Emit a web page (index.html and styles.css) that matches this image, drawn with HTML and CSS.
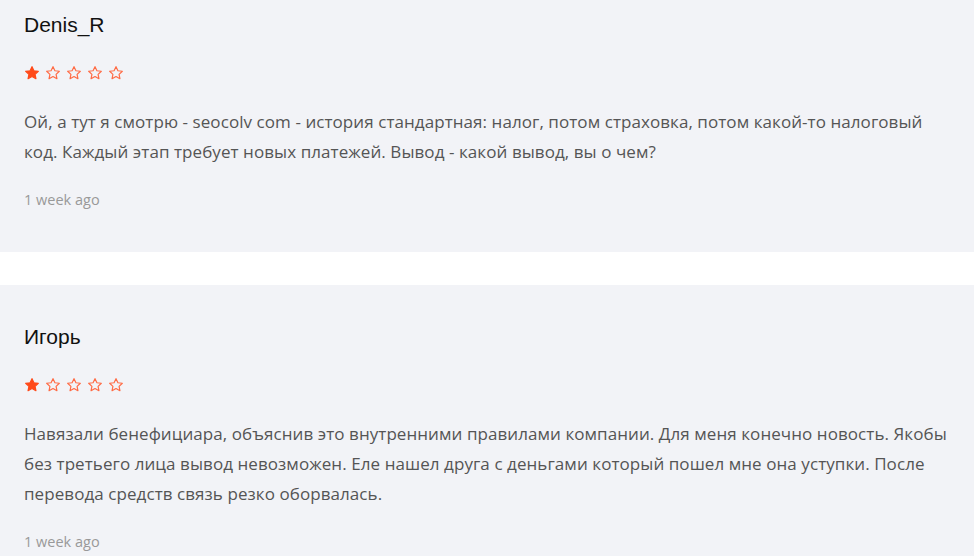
FILE: index.html
```html
<!DOCTYPE html>
<html lang="ru">
<head>
    <meta charset="UTF-8">
    <meta name="viewport" content="width=device-width, initial-scale=1.0">
    <title>Отзывы</title>
    <link rel="stylesheet" href="styles.css">
</head>
<body>

    <div class="reviews">
        <div class="review">
            <div class="review-name">Denis_R</div>
            <div class="review-stars">
                <svg class="star star-full" viewBox="0 0 24 24"><path d="M12 2.5l2.9 6.1 6.6.8-4.9 4.6 1.3 6.6L12 17.3l-5.9 3.3 1.3-6.6-4.9-4.6 6.6-.8z"/></svg>
                <svg class="star" viewBox="0 0 24 24"><path d="M12 2.5l2.9 6.1 6.6.8-4.9 4.6 1.3 6.6L12 17.3l-5.9 3.3 1.3-6.6-4.9-4.6 6.6-.8z"/></svg>
                <svg class="star" viewBox="0 0 24 24"><path d="M12 2.5l2.9 6.1 6.6.8-4.9 4.6 1.3 6.6L12 17.3l-5.9 3.3 1.3-6.6-4.9-4.6 6.6-.8z"/></svg>
                <svg class="star" viewBox="0 0 24 24"><path d="M12 2.5l2.9 6.1 6.6.8-4.9 4.6 1.3 6.6L12 17.3l-5.9 3.3 1.3-6.6-4.9-4.6 6.6-.8z"/></svg>
                <svg class="star" viewBox="0 0 24 24"><path d="M12 2.5l2.9 6.1 6.6.8-4.9 4.6 1.3 6.6L12 17.3l-5.9 3.3 1.3-6.6-4.9-4.6 6.6-.8z"/></svg>
            </div>
            <p class="review-text">Ой, а тут я смотрю - seocolv com - история стандартная: налог, потом страховка, потом какой-то налоговый код. Каждый этап требует новых платежей. Вывод - какой вывод, вы о чем?</p>
            <div class="review-date">1 week ago</div>
        </div>

        <div class="review">
            <div class="review-name">Игорь</div>
            <div class="review-stars">
                <svg class="star star-full" viewBox="0 0 24 24"><path d="M12 2.5l2.9 6.1 6.6.8-4.9 4.6 1.3 6.6L12 17.3l-5.9 3.3 1.3-6.6-4.9-4.6 6.6-.8z"/></svg>
                <svg class="star" viewBox="0 0 24 24"><path d="M12 2.5l2.9 6.1 6.6.8-4.9 4.6 1.3 6.6L12 17.3l-5.9 3.3 1.3-6.6-4.9-4.6 6.6-.8z"/></svg>
                <svg class="star" viewBox="0 0 24 24"><path d="M12 2.5l2.9 6.1 6.6.8-4.9 4.6 1.3 6.6L12 17.3l-5.9 3.3 1.3-6.6-4.9-4.6 6.6-.8z"/></svg>
                <svg class="star" viewBox="0 0 24 24"><path d="M12 2.5l2.9 6.1 6.6.8-4.9 4.6 1.3 6.6L12 17.3l-5.9 3.3 1.3-6.6-4.9-4.6 6.6-.8z"/></svg>
                <svg class="star" viewBox="0 0 24 24"><path d="M12 2.5l2.9 6.1 6.6.8-4.9 4.6 1.3 6.6L12 17.3l-5.9 3.3 1.3-6.6-4.9-4.6 6.6-.8z"/></svg>
            </div>
            <p class="review-text">Навязали бенефициара, объяснив это внутренними правилами компании. Для меня конечно новость. Якобы без третьего лица вывод невозможен. Еле нашел друга с деньгами который пошел мне она уступки. После перевода средств связь резко оборвалась.</p>
            <div class="review-date">1 week ago</div>
        </div>
    </div>

</body>
</html>
```

FILE: styles.css
```css
body {
    margin: 0;
    padding: 0;
    background-color: #fff;
    font-family: 'Open Sans', 'Noto Sans', sans-serif;
    overflow: hidden;
}

/* список отзывов, страница прокручена чуть вниз */
.reviews {
    display: flex;
    flex-direction: column;
    gap: 33px;
    margin-top: -27px;
}

.review {
    background-color: #f2f3f7;
    padding: 40px 16px 42px 24px;
}

.review-name {
    font-family: 'Liberation Sans', Arial, sans-serif;
    font-size: 21px;
    line-height: 24px;
    color: #111;
}

.review-stars {
    display: flex;
    gap: 5px;
    margin-top: 28px;
    height: 16px;
}

.star {
    width: 16px;
    height: 16px;
    fill: none;
    stroke: #ff6b45;
    stroke-width: 1.8;
    stroke-linejoin: round;
}

.star-full {
    fill: #ff4a1a;
    stroke: #ff4a1a;
}

.review-text {
    margin: 26px 0 0;
    font-size: 17px;
    line-height: 30px;
    letter-spacing: 0.07px;
    color: #555;
}

.review-date {
    margin-top: 23px;
    font-size: 14.5px;
    line-height: 20px;
    color: #999;
}
```
